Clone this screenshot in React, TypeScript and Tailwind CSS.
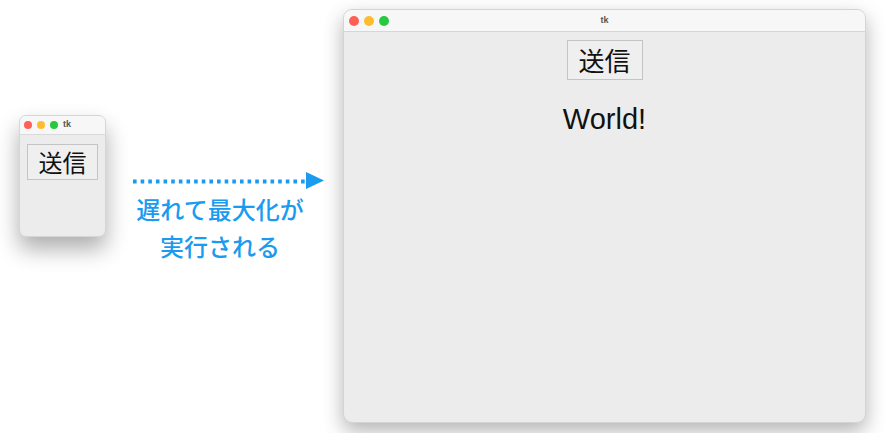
const jp = "font-['Noto_Sans_CJK_JP','Noto_Sans',sans-serif]";

const Lights = ({ size }: { size: "sm" | "lg" }) => {
  const dot = size === "lg" ? "w-[10px] h-[10px]" : "w-[8px] h-[8px]";
  return (
    <div className="flex items-center gap-[5px]">
      <span className={`${dot} rounded-full bg-[#fe5f57]`}></span>
      <span className={`${dot} rounded-full bg-[#febc2e]`}></span>
      <span className={`${dot} rounded-full bg-[#28c840]`}></span>
    </div>
  );
};

const SmallWindow = () => {
  return (
    <div className="w-[87px] h-[122px] rounded-[7px] bg-[#ececec] border border-[#d6d6d6] shadow-[0_12px_22px_rgba(0,0,0,0.32)] overflow-hidden flex flex-col">
      <div className="h-[19px] bg-[#f7f7f7] border-b border-[#d9d9d9] flex items-center pl-[4px] gap-[5px]">
        <Lights size="sm" />
        <span className="text-[9px] font-bold text-[#555] font-['Liberation_Sans',sans-serif]">tk</span>
      </div>
      <div className="flex justify-center pt-[9px]">
        <button
          className={`w-[71px] h-[36px] bg-[#efefef] border border-[#c4c4c4] text-[24px] leading-none text-[#111] flex items-center justify-center ${jp}`}
        >
          送信
        </button>
      </div>
    </div>
  );
};

const Arrow = () => {
  return (
    <svg width="192" height="18" viewBox="0 0 192 18" className="block">
      <line
        x1="0"
        y1="9.5"
        x2="172"
        y2="9.5"
        stroke="#1a9bf0"
        strokeWidth="4"
        strokeDasharray="3.6 4.04"
      />
      <polygon points="173,0 191,8.5 173,17" fill="#1a9bf0" />
    </svg>
  );
};

const LargeWindow = () => {
  return (
    <div className="w-[523px] h-[414px] rounded-[9px] bg-[#ececec] border border-[#d4d4d4] shadow-[0_8px_20px_rgba(0,0,0,0.3)] overflow-hidden flex flex-col">
      <div className="h-[22px] bg-[#f7f7f7] border-b border-[#d6d6d6] grid grid-cols-[1fr_auto_1fr] items-center px-[5px]">
        <Lights size="lg" />
        <span className="text-[9px] font-bold text-[#555] font-['Liberation_Sans',sans-serif]">tk</span>
        <div></div>
      </div>
      <div className="flex flex-col items-center pt-[8px]">
        <button
          className={`w-[76px] h-[40px] bg-[#efefef] border border-[#c4c4c4] text-[26px] leading-none text-[#111] flex items-center justify-center ${jp}`}
        >
          送信
        </button>
        <div className="mt-[21px] text-[29px] leading-[36px] text-[#111] font-['Liberation_Sans',sans-serif]">
          World!
        </div>
      </div>
    </div>
  );
};

const App = () => {
  return (
    <div className="w-[891px] h-[433px] bg-white flex items-start overflow-hidden">
      <div className="ml-[19px] mt-[115px]">
        <SmallWindow />
      </div>
      <div className="w-[237px] shrink-0">
        <div className="mt-[172px] ml-[27px]">
          <Arrow />
        </div>
        <div
          className={`w-[228px] mt-[0px] text-center text-[24px] leading-[37px] font-medium text-[#1a9bf0] ${jp}`}
        >
          <div>遅れて最大化が</div>
          <div>実行される</div>
        </div>
      </div>
      <div className="mt-[9px]">
        <LargeWindow />
      </div>
    </div>
  );
};

export default App;
